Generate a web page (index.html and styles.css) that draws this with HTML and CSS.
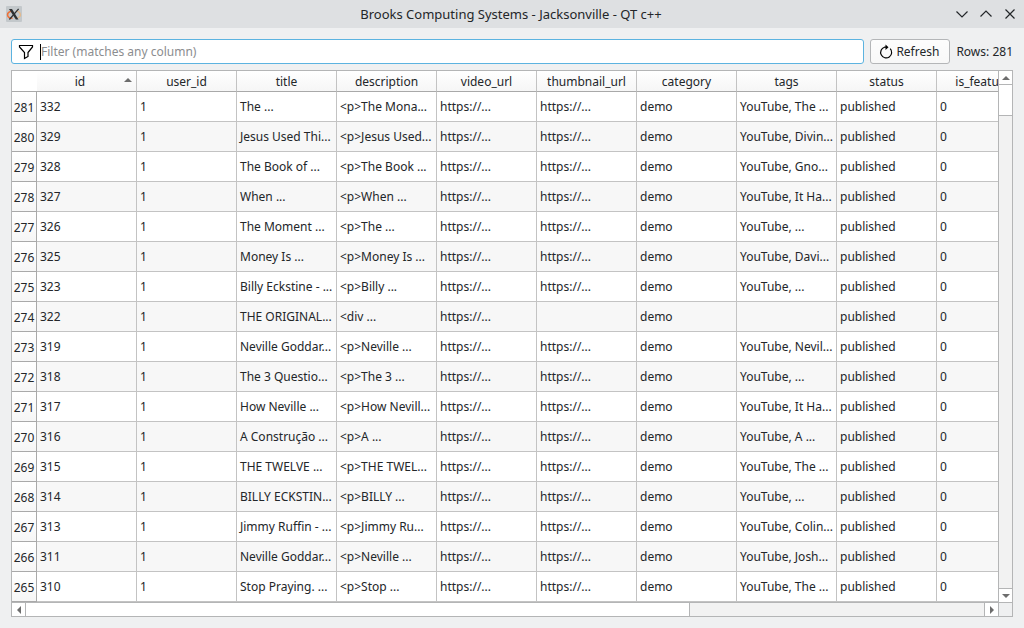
FILE: index.html
```
<!DOCTYPE html>
<html lang="en">
<head>
    <meta charset="UTF-8">
    <meta name="viewport" content="width=device-width, initial-scale=1.0">
    <title>Brooks Computing Systems - Jacksonville - QT c++</title>
    <link rel="stylesheet" href="styles.css">
</head>
<body>
    <header class="titlebar">
        <svg class="app-icon" width="16" height="16" viewBox="0 0 16 16">
            <rect width="16" height="16" rx="1" fill="#c3c8cb"/>
            <path d="M6 5C0 6 0 12.500 6.500 12.200" fill="none" stroke="#ee7038" stroke-width="1.600"/>
            <path d="M10 5c5 .5 6 5.500 1.500 6.800" fill="none" stroke="#e3b98c" stroke-width="1.400"/>
            <path d="M3 3h3l6.500 10.500H9.800z" fill="#2d3032"/>
            <path d="M12.600 2.800L3.400 13.500" stroke="#2d3032" stroke-width="1.200"/>
        </svg>
        <h1>Brooks Computing Systems - Jacksonville - QT c++</h1>
        <div class="window-buttons">
            <button aria-label="Minimize"><svg width="12" height="12" viewBox="0 0 12 12"><path d="M0.500 3.500L6 9l5.500-5.500"/></svg></button>
            <button aria-label="Maximize"><svg width="12" height="12" viewBox="0 0 12 12"><path d="M0.500 8.500L6 3l5.500 5.500"/></svg></button>
            <button aria-label="Close"><svg width="12" height="12" viewBox="0 0 12 12"><path d="M1.500 1.500l9 9M10.500 1.500l-9 9"/></svg></button>
        </div>
    </header>

    <main>
        <div class="toolbar">
            <label class="filter">
                <svg width="16" height="16" viewBox="0 0 16 16"><path d="M1.500 1.500h13v1.500L10 8.500v4l-3.500 2V8.500L1.500 3z"/></svg>
                <span class="caret"></span>
                <input type="text" placeholder="Filter (matches any column)" aria-label="Filter">
            </label>
            <button class="refresh" id="refresh-btn">
                <svg width="14" height="16" viewBox="0 0 14 16"><path d="M11.200 4.700A5.500 5.500 0 1 1 5.500 3.200H7.500"/><path class="head" d="M6.500 0.500L9.500 3.200L6.500 6z"/></svg>
                Refresh
            </button>
            <span class="row-count">Rows: <span id="row-count">281</span></span>
        </div>

        <div class="grid">
            <div class="viewport">
                <table>
                    <thead>
                        <tr>
                            <td class="corner"></td>
                            <th class="sorted">id<svg width="8" height="4" viewBox="0 0 8 4"><path d="M0 4l4-4 4 4z"/></svg></th>
                            <th>user_id</th>
                            <th>title</th>
                            <th>description</th>
                            <th>video_url</th>
                            <th>thumbnail_url</th>
                            <th>category</th>
                            <th>tags</th>
                            <th>status</th>
                            <th>is_featured</th>
                        </tr>
                    </thead>
                    <tbody id="rows"></tbody>
                </table>
            </div>
            <div class="vscroll">
                <button aria-label="Scroll up"><svg width="8" height="4" viewBox="0 0 8 4"><path d="M0 4l4-4 4 4z"/></svg></button>
                <div class="thumb"></div>
                <div class="track"></div>
                <button aria-label="Scroll down"><svg width="8" height="4" viewBox="0 0 8 4"><path d="M0 0h8L4 4z"/></svg></button>
            </div>
            <div class="hscroll">
                <button aria-label="Scroll left"><svg width="4" height="8" viewBox="0 0 4 8"><path d="M4 0v8L0 4z"/></svg></button>
                <div class="thumb"></div>
                <div class="track"></div>
                <button aria-label="Scroll right"><svg width="4" height="8" viewBox="0 0 4 8"><path d="M0 0v8l4-4z"/></svg></button>
            </div>
            <div class="scroll-corner"></div>
        </div>
    </main>

    <script>
        const firstRow = 281;
        // id, title, description, thumbnail_url, tags
        const videos = [
            [332, 'The ...', '<p>The Mona...', 'https://...', 'YouTube, The ...'],
            [329, 'Jesus Used Thi...', '<p>Jesus Used...', 'https://...', 'YouTube, Divin...'],
            [328, 'The Book of ...', '<p>The Book ...', 'https://...', 'YouTube, Gno...'],
            [327, 'When ...', '<p>When ...', 'https://...', 'YouTube, It Ha...'],
            [326, 'The Moment ...', '<p>The ...', 'https://...', 'YouTube, ...'],
            [325, 'Money Is ...', '<p>Money Is ...', 'https://...', 'YouTube, Davi...'],
            [323, 'Billy Eckstine - ...', '<p>Billy ...', 'https://...', 'YouTube, ...'],
            [322, 'THE ORIGINAL...', '<div ...', '', ''],
            [319, 'Neville Goddar...', '<p>Neville ...', 'https://...', 'YouTube, Nevil...'],
            [318, 'The 3 Questio...', '<p>The 3 ...', 'https://...', 'YouTube, ...'],
            [317, 'How Neville ...', '<p>How Nevill...', 'https://...', 'YouTube, It Ha...'],
            [316, 'A Construção ...', '<p>A ...', 'https://...', 'YouTube, A ...'],
            [315, 'THE TWELVE ...', '<p>THE TWEL...', 'https://...', 'YouTube, The ...'],
            [314, 'BILLY ECKSTIN...', '<p>BILLY ...', 'https://...', 'YouTube, ...'],
            [313, 'Jimmy Ruffin - ...', '<p>Jimmy Ru...', 'https://...', 'YouTube, Colin...'],
            [311, 'Neville Goddar...', '<p>Neville ...', 'https://...', 'YouTube, Josh...'],
            [310, 'Stop Praying. ...', '<p>Stop ...', 'https://...', 'YouTube, The ...']
        ];

        function renderRows() {
            const body = document.getElementById('rows');
            body.innerHTML = '';
            videos.forEach(([id, title, description, thumb, tags], i) => {
                const tr = body.insertRow();
                const head = document.createElement('th');
                head.scope = 'row';
                head.textContent = firstRow - i;
                tr.appendChild(head);
                [id, 1, title, description, 'https://...', thumb, 'demo', tags, 'published', 0].forEach(value => {
                    tr.insertCell().textContent = value;
                });
            });
        }

        document.getElementById('refresh-btn').addEventListener('click', renderRows);
        renderRows();
    </script>
</body>
</html>
```
FILE: styles.css
```
* { box-sizing: border-box; }
body { margin: 0; min-height: 100vh; display: flex; flex-direction: column; background: #eff0f1; color: #232629; font: 12px/18px "Noto Sans", sans-serif; }
button, input { font: inherit; color: inherit; }
svg { display: block; flex: none; }

.titlebar { display: grid; grid-template-columns: 1fr auto 1fr; align-items: center; height: 28px; padding: 0 8px 0 6px; background: #dee0e2; }
.titlebar h1 { margin: 0; font-size: 13px; font-weight: 400; }
.window-buttons { display: flex; justify-content: flex-end; gap: 12px; }
.window-buttons button { padding: 0; border: none; background: none; }
.window-buttons path { fill: none; stroke: #232629; stroke-width: 1.2; }

main { flex: 1; display: flex; flex-direction: column; gap: 6px; padding: 11px; }
.toolbar { display: flex; align-items: stretch; gap: 6px; height: 25px; }
.filter { flex: 1; display: flex; align-items: center; padding-left: 6px; background: #fff; border: 1px solid #5cb3e0; border-radius: 3px; }
.filter path { fill: none; stroke: #000; stroke-width: 1.2; }
.filter input { flex: 1; min-width: 0; height: 18px; padding: 0; border: none; outline: none; background: none; }
.filter input::placeholder { color: #8b8d8f; opacity: 1; }
.caret { width: 1px; height: 16px; margin-left: 6px; background: #000; }
.refresh { display: flex; align-items: center; gap: 3px; padding: 0 10px 0 8px; background: linear-gradient(#fdfdfd, #f8f8f8); border: 1px solid #b4b6b8; border-radius: 3px; }
.refresh path { fill: none; stroke: #000; stroke-width: 1.2; }
.refresh .head { fill: #000; stroke: none; }
.row-count { line-height: 25px; white-space: nowrap; }

.grid { flex: 1; display: grid; grid-template-columns: minmax(0, 1fr) 14px; grid-template-rows: 1fr 14px; border: 1px solid #b4b5b6; }
.viewport { overflow: hidden; background: #fff; }
table { width: 1025px; table-layout: fixed; border-collapse: separate; border-spacing: 0; }
td, th { height: 30px; padding: 1px 3px 0; border-right: 1px solid #c3c3c3; border-bottom: 1px solid #c3c3c3; font-weight: 400; text-align: left; white-space: nowrap; }
thead th { height: 21px; padding: 2px 0 0; text-align: center; background: linear-gradient(#fff, #f6f6f6); border-bottom-color: #a9a9a9; }
.corner { width: 25px; height: 21px; padding: 0; border-bottom-color: #a9a9a9; border-right: none; }
thead .sorted { position: relative; padding-right: 13px; }
.sorted svg { position: absolute; top: 7px; right: 4px; }
tbody th { padding: 2px 0 0; text-align: center; background: linear-gradient(#fff, #f6f6f6); border-color: #a9a9a9; }
tbody tr:nth-child(even) td { background: #f7f7f7; }
.grid path { fill: #6d6d6d; }

.vscroll, .hscroll { display: flex; background: #f2f2f2; }
.vscroll { flex-direction: column; border-left: 1px solid #b4b5b6; }
.hscroll { border-top: 1px solid #b4b5b6; }
.grid button { flex: none; display: flex; align-items: center; justify-content: center; padding: 0; border: none; background: #fff; }
.vscroll button { height: 14px; }
.hscroll button { width: 14px; }
.vscroll button:first-child { border-bottom: 1px solid #b4b5b6; }
.vscroll button:last-child { border-top: 1px solid #b4b5b6; }
.hscroll button:first-child { border-right: 1px solid #b4b5b6; }
.hscroll button:last-child { border-left: 1px solid #b4b5b6; }
.thumb { background: #fff; }
.track { flex: 1; }
.vscroll .thumb { height: 5.8%; border-bottom: 1px solid #b4b5b6; }
.hscroll .thumb { width: 67.3%; border-right: 1px solid #b4b5b6; }
.scroll-corner { border-top: 1px solid #b4b5b6; border-left: 1px solid #b4b5b6; }
```
